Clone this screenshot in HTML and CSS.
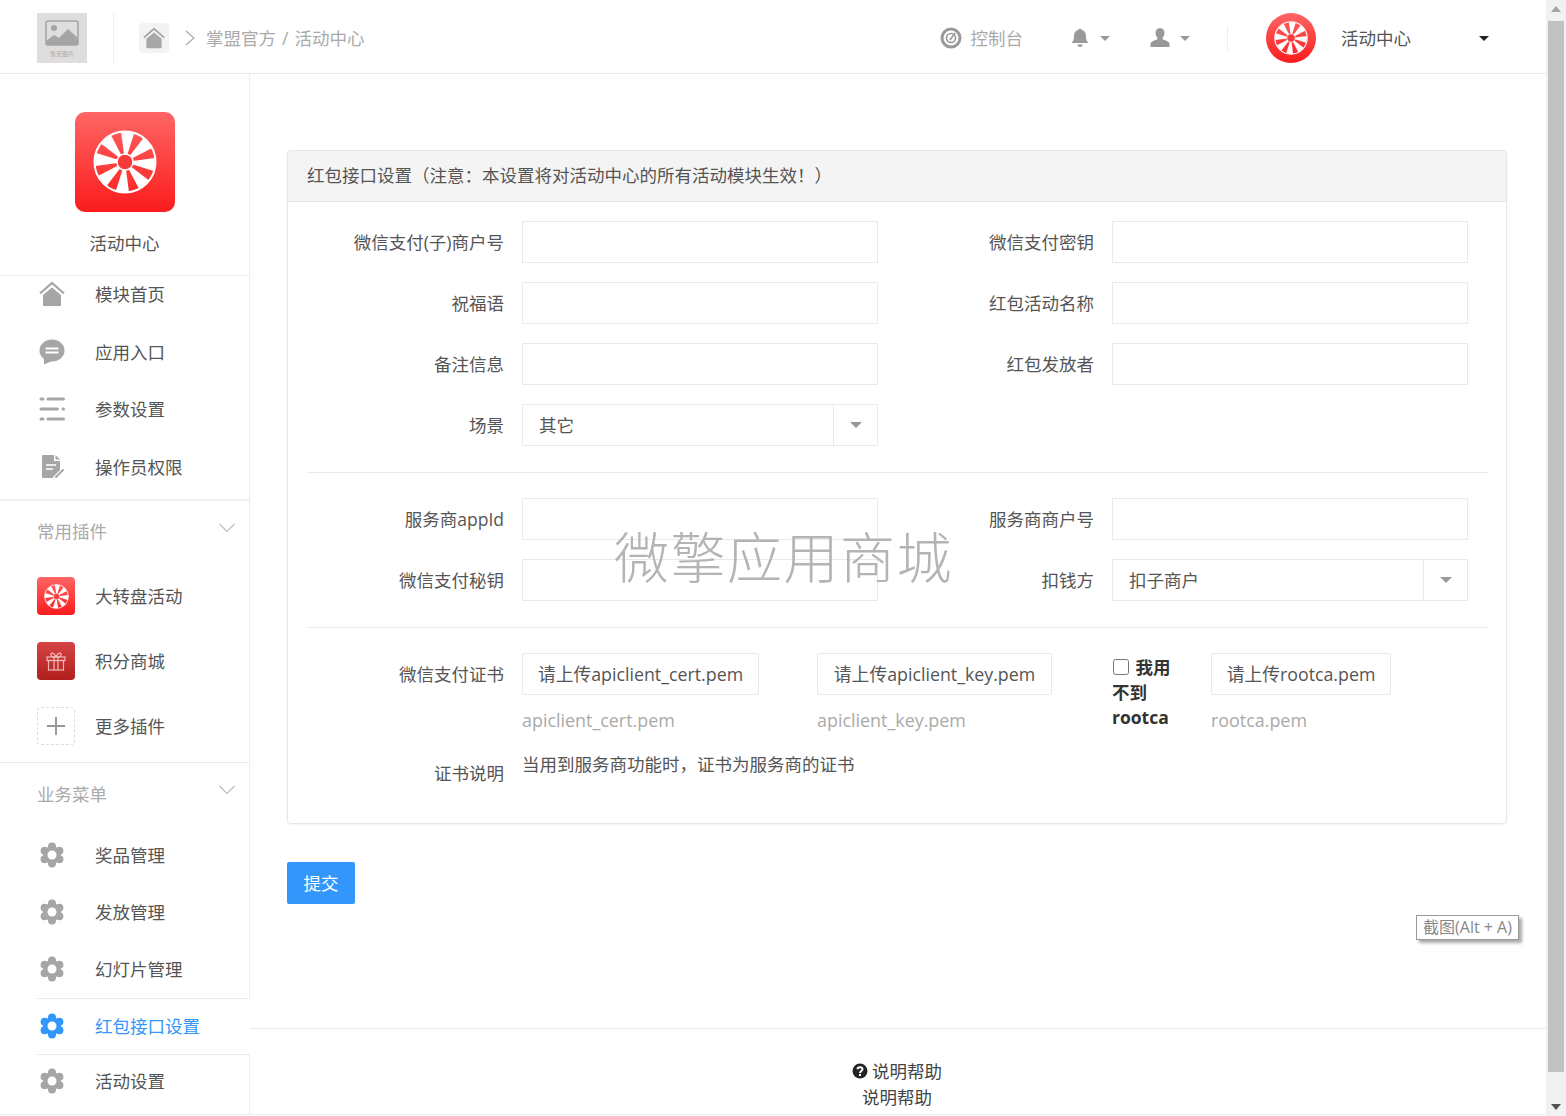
FILE: index.html
```html
<!DOCTYPE html>
<html lang="zh-CN">
<head>
    <meta charset="UTF-8">
    <meta name="viewport" content="width=device-width, initial-scale=1.0">
    <title>红包接口设置</title>
    <link rel="stylesheet" href="styles.css">
</head>
<body>
    <svg class="svg-defs" xmlns="http://www.w3.org/2000/svg">
        <symbol id="ic-wheel" viewBox="-32 -32 64 64">
            <circle r="30.500" fill="none" stroke="#fff" stroke-width="2"/>
            <g fill="#fff">
                <path transform="rotate(5)" d="M0 0L-6.500-29.300A30 30 0 0 1 6.500-29.300Z"/>
                <path transform="rotate(50)" d="M0 0L-6.500-29.300A30 30 0 0 1 6.500-29.300Z"/>
                <path transform="rotate(95)" d="M0 0L-6.500-29.300A30 30 0 0 1 6.500-29.300Z"/>
                <path transform="rotate(140)" d="M0 0L-6.500-29.300A30 30 0 0 1 6.500-29.300Z"/>
                <path transform="rotate(185)" d="M0 0L-6.500-29.300A30 30 0 0 1 6.500-29.300Z"/>
                <path transform="rotate(230)" d="M0 0L-6.500-29.300A30 30 0 0 1 6.500-29.300Z"/>
                <path transform="rotate(275)" d="M0 0L-6.500-29.300A30 30 0 0 1 6.500-29.300Z"/>
                <path transform="rotate(320)" d="M0 0L-6.500-29.300A30 30 0 0 1 6.500-29.300Z"/>
            </g>
            <circle r="8" fill="#f83a3a" stroke="#fff" stroke-width="1.400"/>
        </symbol>
        <symbol id="ic-home" viewBox="0 0 26 26">
            <path fill="currentColor" d="M13 6.500L22 14v10a1 1 0 0 1-1 1H5a1 1 0 0 1-1-1V14Z"/>
            <path fill="none" stroke="currentColor" stroke-width="2.200" d="M1 12.500L13 2l12 10.500"/>
        </symbol>
        <symbol id="ic-chat" viewBox="0 0 26 26">
            <ellipse cx="13" cy="11.500" rx="12.500" ry="11" fill="currentColor"/>
            <path fill="currentColor" d="M5 19v6.500l8-3.500Z"/>
            <path stroke="#fff" stroke-width="1.800" d="M6.500 9.500h13M6.500 13.500h13"/>
        </symbol>
        <symbol id="ic-list" viewBox="0 0 26 26">
            <path stroke="currentColor" stroke-width="3" stroke-linecap="round" d="M2 3h2M9 3h15.500M2 13h16.500M24 13h.5M2 23h2M9 23h15.500"/>
        </symbol>
        <symbol id="ic-doc" viewBox="0 0 26 26">
            <path fill="currentColor" d="M3 2a1 1 0 0 1 1-1h11v6h6v9l-7 7v1H4a1 1 0 0 1-1-1Z"/>
            <path fill="currentColor" d="M16.500 1l4.500 4.500h-4.500Z"/>
            <path stroke="#fff" stroke-width="1.600" d="M7 11h10M7 15h7"/>
            <path stroke="currentColor" stroke-width="2" stroke-linecap="round" d="M17 23l7-7"/>
        </symbol>
        <symbol id="ic-gear" viewBox="0 0 26 26">
            <g fill="currentColor">
                <circle cx="13" cy="13" r="9"/>
                <circle cx="13" cy="4.500" r="4"/>
                <circle cx="13" cy="21.500" r="4"/>
                <circle cx="5.600" cy="8.750" r="4"/>
                <circle cx="20.400" cy="8.750" r="4"/>
                <circle cx="5.600" cy="17.250" r="4"/>
                <circle cx="20.400" cy="17.250" r="4"/>
            </g>
            <circle cx="13" cy="13" r="4.500" fill="#fff"/>
        </symbol>
        <symbol id="ic-bell" viewBox="0 0 20 20">
            <path fill="currentColor" d="M10 .5a1.500 1.500 0 0 1 1.500 1.600C15 2.800 16 5.500 16 8.500c0 3.500 1 5 2.500 6.500h-17C3 13.500 4 12 4 8.500c0-3 1-5.700 4.500-6.400A1.500 1.500 0 0 1 10 .5Z"/>
            <path fill="currentColor" d="M7.500 16.500a2.500 2.500 0 0 0 5 0Z"/>
        </symbol>
        <symbol id="ic-user" viewBox="0 0 20 20">
            <path fill="currentColor" d="M10 0c3 0 4.500 2.200 4.500 5 0 2-1 3.800-2 4.800v1.500c2 .8 7 2 7 4.700v3H.5v-3c0-2.700 5-3.900 7-4.700V9.800c-1-1-2-2.800-2-4.800C5.500 2.200 7 0 10 0Z"/>
        </symbol>
    </svg>

    <div class="page">
        <div class="app">
            <header class="topbar">
                <div class="logo-tile">
                    <svg class="logo-pic" viewBox="0 0 34 26">
                        <rect x="1" y="1" width="32" height="24" rx="2" fill="none" stroke="#a5a5a5" stroke-width="1.600"/>
                        <circle cx="9" cy="8" r="3" fill="#a5a5a5"/>
                        <path fill="#a5a5a5" d="M1 21l8-6 5 3 9-9 10 9v7H1Z"/>
                    </svg>
                    <span class="logo-cap">暂无图片</span>
                </div>
                <span class="topbar-sep"></span>
                <a class="home-tile" href="#"><svg class="home-icon"><use href="#ic-home"/></svg></a>
                <svg class="crumb-arrow" viewBox="0 0 10 16"><path d="M1 1l8 7-8 7" fill="none" stroke="#aaa" stroke-width="1.200"/></svg>
                <span class="crumb">掌盟官方 / 活动中心</span>

                <div class="topbar-right">
                    <a class="console" href="#">
                        <svg class="console-icon" viewBox="0 0 22 22">
                            <circle cx="11" cy="11" r="9" fill="none" stroke="#999" stroke-width="3"/>
                            <circle cx="11" cy="11" r="4.500" fill="none" stroke="#999" stroke-width="1.600"/>
                            <path d="M10 13l5-7" stroke="#999" stroke-width="1.600"/>
                        </svg>
                        控制台
                    </a>
                    <a class="top-drop top-drop-bell" href="#"><svg class="top-icon"><use href="#ic-bell"/></svg><i class="caret"></i></a>
                    <a class="top-drop top-drop-user" href="#"><svg class="top-icon"><use href="#ic-user"/></svg><i class="caret"></i></a>
                    <span class="topbar-sep2"></span>
                    <span class="avatar"><svg class="avatar-wheel"><use href="#ic-wheel"/></svg></span>
                    <span class="account">活动中心</span>
                    <i class="caret caret-dark"></i>
                </div>
            </header>

            <div class="layout">
                <aside class="sidebar">
                    <div class="brand">
                        <div class="brand-icon"><svg class="brand-wheel"><use href="#ic-wheel"/></svg></div>
                        <div class="brand-name">活动中心</div>
                    </div>

                    <ul class="side-menu">
                        <li class="side-item"><svg class="side-icon"><use href="#ic-home"/></svg>模块首页</li>
                        <li class="side-item"><svg class="side-icon"><use href="#ic-chat"/></svg>应用入口</li>
                        <li class="side-item"><svg class="side-icon"><use href="#ic-list"/></svg>参数设置</li>
                        <li class="side-item"><svg class="side-icon"><use href="#ic-doc"/></svg>操作员权限</li>
                    </ul>

                    <div class="side-head side-head-plugin">常用插件<svg class="side-chevron" viewBox="0 0 16 10"><path d="M.5 1l7.500 7.500L15.500 1" fill="none" stroke="#bbb" stroke-width="1.100"/></svg></div>
                    <ul class="plugin-list">
                        <li class="plugin-item"><span class="plugin-icon plugin-red"><svg class="plugin-wheel"><use href="#ic-wheel"/></svg></span>大转盘活动</li>
                        <li class="plugin-item">
                            <span class="plugin-icon plugin-gift">
                                <svg class="gift" viewBox="0 0 20 20" fill="none" stroke="#f0b8b8" stroke-width="1.200">
                                    <rect x="1" y="6" width="18" height="3.500"/>
                                    <rect x="2.500" y="9.500" width="15" height="9.500"/>
                                    <path d="M8 6v13M12 6v13M10 6C8 1 4 1 5 4.500 5.500 6 8 6 10 6c2 0 4.500 0 5-1.500C16 1 12 1 10 6Z"/>
                                </svg>
                            </span>积分商城
                        </li>
                        <li class="plugin-item"><span class="plugin-icon plugin-more"></span>更多插件</li>
                    </ul>

                    <div class="side-head">业务菜单<svg class="side-chevron" viewBox="0 0 16 10"><path d="M.5 1l7.500 7.500L15.500 1" fill="none" stroke="#bbb" stroke-width="1.100"/></svg></div>
                    <ul class="biz-list">
                        <li class="biz-item"><svg class="side-icon"><use href="#ic-gear"/></svg>奖品管理</li>
                        <li class="biz-item"><svg class="side-icon"><use href="#ic-gear"/></svg>发放管理</li>
                        <li class="biz-item"><svg class="side-icon"><use href="#ic-gear"/></svg>幻灯片管理</li>
                        <li class="biz-item active"><svg class="side-icon"><use href="#ic-gear"/></svg>红包接口设置</li>
                        <li class="biz-item last"><svg class="side-icon"><use href="#ic-gear"/></svg>活动设置</li>
                    </ul>
                </aside>

                <main class="content">
                    <form class="settings">
                        <section class="card">
                            <div class="card-head">红包接口设置（注意：本设置将对活动中心的所有活动模块生效！）</div>
                            <div class="card-body">
                                <div class="form-row">
                                    <label class="form-label">微信支付(子)商户号</label><input class="field" type="text">
                                    <label class="form-label">微信支付密钥</label><input class="field" type="text">
                                </div>
                                <div class="form-row">
                                    <label class="form-label">祝福语</label><input class="field" type="text">
                                    <label class="form-label">红包活动名称</label><input class="field" type="text">
                                </div>
                                <div class="form-row">
                                    <label class="form-label">备注信息</label><input class="field" type="text">
                                    <label class="form-label">红包发放者</label><input class="field" type="text">
                                </div>
                                <div class="form-row">
                                    <label class="form-label">场景</label>
                                    <div class="pick"><span class="pick-value">其它</span><span class="pick-btn"><i class="caret"></i></span></div>
                                </div>

                                <hr class="form-sep">

                                <div class="form-row">
                                    <label class="form-label">服务商appId</label><input class="field" type="text">
                                    <label class="form-label">服务商商户号</label><input class="field" type="text">
                                </div>
                                <div class="form-row">
                                    <label class="form-label">微信支付秘钥</label><input class="field" type="text">
                                    <label class="form-label">扣钱方</label>
                                    <div class="pick"><span class="pick-value">扣子商户</span><span class="pick-btn"><i class="caret"></i></span></div>
                                </div>

                                <hr class="form-sep">

                                <div class="cert-row">
                                    <label class="form-label">微信支付证书</label>
                                    <div class="cert-col">
                                        <button class="upload-btn upload-cert" type="button">请上传apiclient_cert.pem</button>
                                        <div class="cert-name">apiclient_cert.pem</div>
                                    </div>
                                    <div class="cert-col">
                                        <button class="upload-btn upload-key" type="button">请上传apiclient_key.pem</button>
                                        <div class="cert-name">apiclient_key.pem</div>
                                    </div>
                                    <label class="no-root"><input class="no-root-check" type="checkbox"> 我用不到rootca</label>
                                    <div class="cert-col">
                                        <button class="upload-btn upload-root" type="button">请上传rootca.pem</button>
                                        <div class="cert-name">rootca.pem</div>
                                    </div>
                                </div>
                                <div class="note-row">
                                    <label class="form-label">证书说明</label>
                                    <p class="note">当用到服务商功能时，证书为服务商的证书</p>
                                </div>
                            </div>
                        </section>
                        <button class="submit-btn" type="submit">提交</button>
                    </form>

                    <footer class="help">
                        <div class="help-line">
                            <svg class="help-icon" viewBox="0 0 16 16">
                                <circle cx="8" cy="8" r="7.500" fill="#222"/>
                                <path d="M5.500 6.200C5.500 3.500 10.500 3.500 10.500 6.200 10.500 8 8 8 8 10" fill="none" stroke="#fff" stroke-width="2"/>
                                <rect x="7" y="11" width="2" height="2" fill="#fff"/>
                            </svg>说明帮助
                        </div>
                        <div class="help-line">说明帮助</div>
                    </footer>
                </main>
            </div>
        </div>

        <div class="scrollbar">
            <span class="scroll-up"></span>
            <span class="scroll-thumb"></span>
            <span class="scroll-down"></span>
        </div>
    </div>

    <div class="watermark">微擎应用商城</div>
    <div class="shot-hint">截图(Alt + A)</div>
</body>
</html>
```

FILE: styles.css
```css
/* General Styles */
* {
    box-sizing: border-box;
}

html, body {
    margin: 0;
    padding: 0;
    height: 100%;
    overflow: hidden;
}

body {
    font-family: "Open Sans", "Noto Sans CJK SC", sans-serif;
    font-size: 17.5px;
    line-height: 26px;
    color: #555;
    background: #fff;
}

a {
    color: inherit;
    text-decoration: none;
}

ul {
    list-style: none;
    margin: 0;
    padding: 0;
}

.svg-defs {
    display: none;
}

.page {
    display: flex;
    height: 1116px;
}

.app {
    flex: 1;
    min-width: 0;
    display: flex;
    flex-direction: column;
}

/* Top bar */
.topbar {
    height: 74px;
    flex: none;
    display: flex;
    align-items: center;
    padding: 3px 57px 0 37px;
    border-bottom: 1px solid #e9e9e9;
}

.logo-tile {
    width: 50px;
    height: 50px;
    background: #dfdddd;
    display: flex;
    flex-direction: column;
    align-items: center;
    padding-top: 7px;
}

.logo-pic {
    width: 34px;
    height: 26px;
}

.logo-cap {
    font-size: 6px;
    line-height: 12px;
    color: #aaa;
    margin-top: 2px;
}

.topbar-sep {
    width: 1px;
    height: 50px;
    background: #eee;
    margin-left: 26px;
}

.home-tile {
    width: 30px;
    height: 30px;
    margin-left: 25px;
    border-radius: 4px;
    background: #f2f3f5;
    color: #a8a8a8;
    display: flex;
    align-items: center;
    justify-content: center;
}

.home-icon {
    width: 22px;
    height: 22px;
}

.crumb-arrow {
    width: 10px;
    height: 16px;
    margin-left: 16px;
}

.crumb {
    margin-left: 11px;
    color: #aaa;
    word-spacing: 1.5px;
    white-space: pre;
}

.topbar-right {
    margin-left: auto;
    display: flex;
    align-items: center;
}

.console {
    display: flex;
    align-items: center;
    color: #aaa;
}

.console-icon {
    width: 22px;
    height: 22px;
    margin-right: 9px;
}

.top-drop {
    display: flex;
    align-items: center;
    color: #999;
}

.top-drop-bell {
    margin-left: 47px;
}

.top-drop-user {
    margin-left: 40px;
}

.top-icon {
    width: 20px;
    height: 20px;
}

.caret {
    display: inline-block;
    width: 0;
    height: 0;
    margin-left: 10px;
    border-left: 5px solid transparent;
    border-right: 5px solid transparent;
    border-top: 5px solid #999;
}

.caret-dark {
    border-top-color: #222;
    margin-left: 68px;
}

.topbar-sep2 {
    width: 1px;
    height: 24px;
    background: #eee;
    margin-left: 37px;
}

.avatar {
    width: 50px;
    height: 50px;
    margin-left: 38px;
    border-radius: 50%;
    background: linear-gradient(#ff6565, #fb1c1c);
    display: flex;
    align-items: center;
    justify-content: center;
}

.avatar-wheel {
    width: 34px;
    height: 34px;
}

.account {
    margin-left: 25px;
}

/* Sidebar */
.layout {
    flex: 1;
    min-height: 0;
    display: flex;
    padding-bottom: 1px;
}

.sidebar {
    width: 250px;
    flex: none;
    border-right: 1px solid #eee;
    border-bottom: 1px solid #eee;
}

.brand {
    height: 202px;
    padding-top: 38px;
    text-align: center;
    border-bottom: 1px solid #eee;
}

.brand-icon {
    width: 100px;
    height: 100px;
    margin: 0 auto;
    border-radius: 10px;
    background: linear-gradient(#ff6565, #fb1c1c);
    display: flex;
    align-items: center;
    justify-content: center;
}

.brand-wheel {
    width: 64px;
    height: 64px;
}

.brand-name {
    margin-top: 18px;
}

.side-menu {
    display: flex;
    flex-direction: column;
    gap: 31.5px;
    padding: 5px 0 19.5px;
    border-bottom: 2px solid #f0f0f0;
}

.side-item {
    height: 26px;
    display: flex;
    align-items: center;
    padding-left: 37px;
}

.side-icon {
    width: 26px;
    height: 26px;
    margin-left: 2px;
    margin-right: 30px;
    flex: none;
    color: #a5a6a8;
}

.side-head {
    position: relative;
    padding: 18px 0 0 37px;
    color: #aaa;
}

.side-head-plugin {
    padding-top: 17px;
}

.side-chevron {
    position: absolute;
    left: 219px;
    top: 22px;
    width: 16px;
    height: 10px;
}

.plugin-list {
    display: flex;
    flex-direction: column;
    gap: 27px;
    padding: 33px 0 17px;
    border-bottom: 1px solid #e9e9e9;
}

.plugin-item {
    height: 38px;
    display: flex;
    align-items: center;
    padding-left: 37px;
}

.plugin-icon {
    width: 38px;
    height: 38px;
    margin-right: 20px;
    border-radius: 4px;
    display: flex;
    align-items: center;
    justify-content: center;
    flex: none;
}

.plugin-red {
    background: linear-gradient(#ff6565, #fb1c1c);
}

.plugin-wheel {
    width: 25px;
    height: 25px;
}

.plugin-gift {
    background: linear-gradient(#d64545, #b01e1e);
}

.gift {
    width: 20px;
    height: 20px;
}

.plugin-more {
    position: relative;
    border: 1px dashed #ddd;
}

.plugin-more::before,
.plugin-more::after {
    content: "";
    position: absolute;
    background: #999;
}

.plugin-more::before {
    left: 9px;
    top: 17px;
    width: 18px;
    height: 2px;
}

.plugin-more::after {
    left: 17px;
    top: 9px;
    width: 2px;
    height: 18px;
}

.biz-list {
    margin-top: 20px;
}

.biz-item {
    height: 57px;
    display: flex;
    align-items: center;
    padding-left: 37px;
    padding-bottom: 2px;
}

.biz-item.last {
    height: 54px;
}

.biz-item.active {
    position: relative;
    margin-left: 37px;
    margin-right: -1px;
    padding-left: 0;
    padding-bottom: 2px;
    background: #fff;
    color: #3296fa;
    border-top: 1px solid #e9e9e9;
    border-bottom: 1px solid #e9e9e9;
}

.biz-item.active .side-icon {
    color: #3296fa;
}

/* Main content */
.content {
    flex: 1;
    min-width: 0;
    display: flex;
    flex-direction: column;
    border-bottom: 1px solid #eee;
}

.settings {
    padding: 76px 39px 0 37px;
}

.card {
    border: 1px solid #e6e6e6;
    border-radius: 4px;
    box-shadow: 0 1px 2px rgba(0, 0, 0, 0.06);
}

.card-head {
    height: 51px;
    padding: 0 19px 2px;
    display: flex;
    align-items: center;
    background: #f4f4f4;
    border-bottom: 1px solid #e5e5e5;
    border-radius: 4px 4px 0 0;
}

.card-body {
    padding: 19px 0 29px;
}

.form-row {
    display: grid;
    grid-template-columns: 216px 356px 198px 356px;
    column-gap: 18px;
    margin-bottom: 19px;
}

.form-label {
    line-height: 42px;
    text-align: right;
}

.field {
    height: 42px;
    width: 100%;
    padding: 0 16px;
    border: 1px solid #e9e9e9;
    background: #fff;
    font: inherit;
    outline: none;
}

.pick {
    height: 42px;
    display: flex;
    border: 1px solid #e9e9e9;
}

.pick-value {
    flex: 1;
    padding-left: 16px;
    line-height: 40px;
}

.pick-btn {
    width: 44px;
    display: flex;
    align-items: center;
    justify-content: center;
    border-left: 1px solid #e9e9e9;
}

.pick-btn .caret {
    margin-left: 0;
    border-left-width: 6px;
    border-right-width: 6px;
    border-top-width: 6px;
}

.form-sep {
    height: 1px;
    margin: 26px 18px 25px 19px;
    border: 0;
    background: #e9e9e9;
}

.cert-row {
    display: grid;
    grid-template-columns: 216px 295px 295px 99px 180px;
}

.cert-row > .cert-col,
.cert-row > .no-root {
    margin-left: 18px;
}

.upload-btn {
    display: block;
    height: 42px;
    padding: 0;
    border: 1px solid #e9e9e9;
    border-radius: 2px;
    background: #fff;
    color: #555;
    font: inherit;
    font-size: 17.8px;
    white-space: nowrap;
}

.upload-cert {
    width: 237px;
}

.upload-key {
    width: 235px;
}

.upload-root {
    width: 180px;
}

.cert-name {
    margin-top: 12px;
    color: #aaa;
    font-size: 17.9px;
}

.no-root {
    display: block;
    width: 60px;
    padding-top: 2px;
    font-weight: 700;
    color: #333;
    line-height: 25px;
}

.no-root-check {
    width: 16px;
    height: 16px;
    margin: 0 2px 0 1px;
    vertical-align: -1px;
}

.note-row {
    display: grid;
    grid-template-columns: 216px 1fr;
    column-gap: 18px;
    margin-top: 19px;
}

.note {
    margin: 0;
    line-height: 24px;
}

.submit-btn {
    display: block;
    width: 68px;
    height: 42px;
    margin-top: 38px;
    padding: 0;
    border: 0;
    border-radius: 2px;
    background: #3296fa;
    color: #fff;
    font: inherit;
}

.help {
    margin-top: auto;
    padding: 29px 0 4px;
    border-top: 1px solid #e9e9e9;
    text-align: center;
    color: #444;
}

.help-line {
    display: flex;
    align-items: center;
    justify-content: center;
    height: 26px;
    padding-right: 2px;
}

.help-icon {
    width: 16px;
    height: 16px;
    margin-right: 4px;
}

/* Scrollbar */
.scrollbar {
    width: 20px;
    flex: none;
    position: relative;
    background: #f1f1f1;
}

.scroll-thumb {
    position: absolute;
    left: 2px;
    right: 2px;
    top: 21px;
    height: 1051px;
    background: #c1c1c1;
}

.scroll-up,
.scroll-down {
    position: absolute;
    left: 5px;
    width: 0;
    height: 0;
    border-left: 5px solid transparent;
    border-right: 5px solid transparent;
}

.scroll-up {
    top: 6px;
    border-bottom: 6px solid #a3a3a3;
}

.scroll-down {
    bottom: 6px;
    border-top: 6px solid #505050;
}

/* Overlays */
.watermark {
    position: absolute;
    left: 614px;
    top: 517px;
    font-size: 55px;
    line-height: 80px;
    font-weight: 300;
    letter-spacing: 1.5px;
    white-space: nowrap;
    color: #b4b4b4;
    pointer-events: none;
}

.shot-hint {
    position: absolute;
    left: 1416px;
    top: 915px;
    width: 103px;
    height: 25px;
    border: 1px solid #999;
    background: #fff;
    box-shadow: 3px 3px 3px #aaa;
    font-size: 16px;
    line-height: 23px;
    color: #888;
    text-align: center;
    white-space: nowrap;
}
```
